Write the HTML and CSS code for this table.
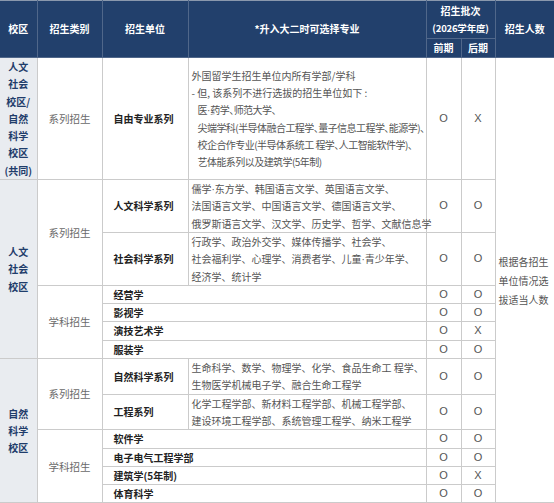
FILE: index.html
```html
<!DOCTYPE html>
<html lang="zh">
<head>
<meta charset="utf-8">
<title>招生单位</title>
<link rel="stylesheet" href="styles.css">
</head>
<body>
<table class="adm">
  <colgroup>
    <col class="c-campus">
    <col class="c-type">
    <col class="c-unit">
    <col class="c-major">
    <col class="c-ox">
    <col class="c-ox2">
    <col class="c-count">
  </colgroup>
  <thead>
    <tr class="h1">
      <th rowspan="2">校区</th>
      <th rowspan="2">招生类别</th>
      <th rowspan="2">招生单位</th>
      <th rowspan="2">*升入大二时可选择专业</th>
      <th colspan="2" class="batch">招生批次<br><span class="year">(2026学年度)</span></th>
      <th rowspan="2">招生人数</th>
    </tr>
    <tr class="h2">
      <th>前期</th>
      <th>后期</th>
    </tr>
  </thead>
  <tbody>
    <tr>
      <td class="campus">人文<br>社会<br>校区/<br>自然<br>科学<br>校区<br>(共同)</td>
      <td class="type">系列招生</td>
      <td class="unit">自由专业系列</td>
      <td class="major">
        <div>外国留学生招生单位内所有学部/学科</div>
        <div>- 但, 该系列不进行选拔的招生单位如下 :</div>
        <div class="ind">医<span class="dot">·</span>药学、师范大学、</div>
        <div class="ind">尖端学科(半导体融合工程学、量子信息工程学、能源学)、</div>
        <div class="ind">校企合作专业(半导体系统工 程学、人工智能软件学)、</div>
        <div class="ind">艺体能系列以及建筑学(5年制)</div>
      </td>
      <td class="ox">O</td>
      <td class="ox">X</td>
      <td class="count" rowspan="13">根据各招生<br>单位情况选<br>拔适当人数</td>
    </tr>
    <tr>
      <td class="campus" rowspan="6">人文<br>社会<br>校区</td>
      <td class="type" rowspan="2">系列招生</td>
      <td class="unit">人文科学系列</td>
      <td class="major">儒学<span class="dot">·</span>东方学、韩国语言文学、英国语言文学、<br>法国语言文学、中国语言文学、德国语言文学、<br>俄罗斯语言文学、汉文学、历史学、哲学、文献信息学</td>
      <td class="ox">O</td>
      <td class="ox">O</td>
    </tr>
    <tr>
      <td class="unit">社会科学系列</td>
      <td class="major">行政学、政治外交学、媒体传播学、社会学、<br>社会福利学、心理学、消费者学、儿童<span class="dot">·</span>青少年学、<br>经济学、统计学</td>
      <td class="ox">O</td>
      <td class="ox">O</td>
    </tr>
    <tr>
      <td class="type" rowspan="4">学科招生</td>
      <td class="unit" colspan="2">经营学</td>
      <td class="ox">O</td>
      <td class="ox">O</td>
    </tr>
    <tr>
      <td class="unit" colspan="2">影视学</td>
      <td class="ox">O</td>
      <td class="ox">O</td>
    </tr>
    <tr>
      <td class="unit" colspan="2">演技艺术学</td>
      <td class="ox">O</td>
      <td class="ox">X</td>
    </tr>
    <tr>
      <td class="unit" colspan="2">服装学</td>
      <td class="ox">O</td>
      <td class="ox">O</td>
    </tr>
    <tr>
      <td class="campus" rowspan="6">自然<br>科学<br>校区</td>
      <td class="type" rowspan="2">系列招生</td>
      <td class="unit">自然科学系列</td>
      <td class="major">生命科学、数学、物理学、化学、食品生命工 程学、<br>生物医学机械电子学、融合生命工程学</td>
      <td class="ox">O</td>
      <td class="ox">O</td>
    </tr>
    <tr>
      <td class="unit">工程系列</td>
      <td class="major">化学工程学部、新材料工程学部、机械工程学部、<br>建设环境工程学部、系统管理工程学、纳米工程学</td>
      <td class="ox">O</td>
      <td class="ox">O</td>
    </tr>
    <tr>
      <td class="type" rowspan="4">学科招生</td>
      <td class="unit" colspan="2">软件学</td>
      <td class="ox">O</td>
      <td class="ox">O</td>
    </tr>
    <tr>
      <td class="unit" colspan="2">电子电气工程学部</td>
      <td class="ox">O</td>
      <td class="ox">O</td>
    </tr>
    <tr>
      <td class="unit" colspan="2">建筑学(5年制)</td>
      <td class="ox">O</td>
      <td class="ox">X</td>
    </tr>
    <tr>
      <td class="unit" colspan="2">体育科学</td>
      <td class="ox">O</td>
      <td class="ox">O</td>
    </tr>
  </tbody>
</table>
</body>
</html>
```

FILE: styles.css
```css
html, body {
  margin: 0;
  padding: 0;
  background: #ffffff;
}

body {
  font-family: "Noto Sans CJK SC", "Noto Sans", sans-serif;
}

.adm {
  width: 554px;
  table-layout: fixed;
  border-collapse: collapse;
  font-size: 10px;
  line-height: 17.3px;
  border-bottom: 1px solid #3c5a86;
}

.c-campus { width: 37px; }
.c-type { width: 65px; }
.c-unit { width: 86px; }
.c-major { width: 238px; }
.c-ox { width: 35px; }
.c-ox2 { width: 34px; }
.c-count { width: 59px; }

.adm th {
  background: #22406c;
  color: #ffffff;
  font-weight: bold;
  border: 1px solid #50678a;
  border-top-color: #8a98ad;
  padding: 0;
  text-align: center;
  vertical-align: middle;
}

.adm th:first-child {
  border-left: none;
}

.adm .h1 th:last-child {
  border-right: none;
}

.h1 {
  height: 38px;
}

.h2 {
  height: 19px;
}

.batch {
  line-height: 17px;
}

.year {
  font-size: 9.5px;
  letter-spacing: -0.2px;
}

.adm td {
  border: 1px solid #cbcbcb;
  padding: 0;
  vertical-align: middle;
  color: #555555;
}

.campus {
  background: #e9ecf0;
  color: #1f3d6b !important;
  font-weight: bold;
  text-align: center;
  border-left: none !important;
}

.type {
  text-align: center;
  color: #6a6a6a !important;
  font-size: 10.5px;
}

.unit {
  font-weight: bold;
  color: #222222 !important;
  padding-left: 11px !important;
  white-space: nowrap;
}

.major {
  padding: 0 0 0 3px !important;
  white-space: nowrap;
  color: #555555;
}

.major .ind {
  padding-left: 6px;
  font-feature-settings: "halt";
  letter-spacing: -0.55px;
}

.dot {
  font-family: "Liberation Sans", Arial, sans-serif;
  letter-spacing: 0;
  line-height: 0;
}

.ox {
  text-align: center;
  font-family: "Liberation Sans", Arial, sans-serif;
  font-size: 11px;
  color: #555555;
}

.count {
  border-right: none !important;
  padding-left: 3px !important;
  line-height: 19px;
  color: #555555;
}
```
